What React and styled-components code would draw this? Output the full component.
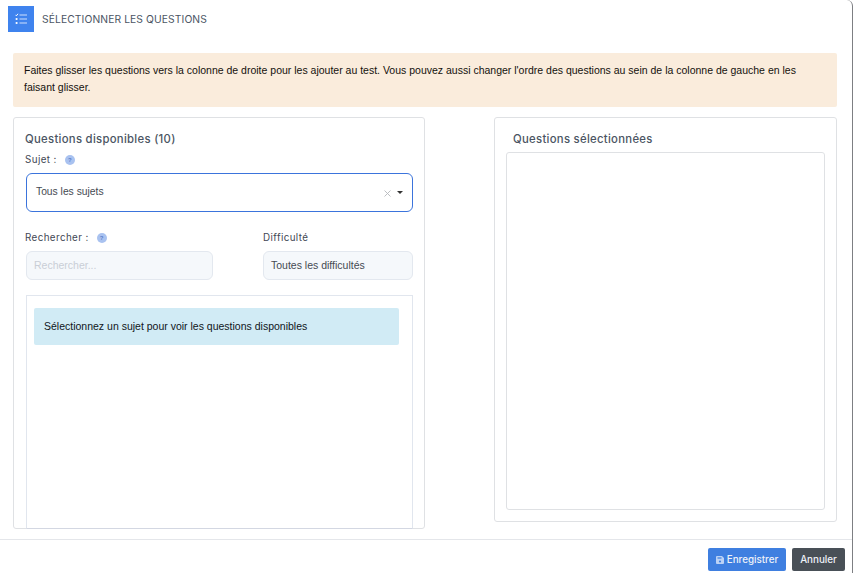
import React from "react";
import styled, { createGlobalStyle } from "styled-components";

const GlobalStyle = createGlobalStyle`
  html, body {
    margin: 0;
    padding: 0;
    background: #fff;
  }
  * {
    box-sizing: border-box;
  }
`;

const heading = `"Inter", "Noto Sans", sans-serif`;
const body = `"Liberation Sans", Arial, sans-serif`;

const Modal = styled.div`
  width: 853px;
  height: 573px;
  display: flex;
  flex-direction: column;
  background: #fff;
  border-right: 1px solid #7d7f83;
  border-top-right-radius: 6px;
  overflow: hidden;
`;

const Header = styled.div`
  height: 53px;
  flex: none;
  display: flex;
  align-items: flex-start;
  gap: 8px;
  padding: 6px 8px 0;
`;

const HeaderIcon = styled.div`
  width: 26px;
  height: 26px;
  background: #3f83ee;
  display: flex;
  align-items: center;
  justify-content: center;
`;

const Title = styled.div`
  font-family: ${heading};
  font-size: 10.3px;
  line-height: 26px;
  letter-spacing: 0.1px;
  color: #4b5563;
`;

const Content = styled.div`
  flex: 1;
  min-height: 0;
  padding: 0 15px 0 13px;
`;

const Alert = styled.div`
  height: 54px;
  padding: 9px 11px;
  background: #faecdc;
  border-radius: 2px;
  font-family: ${body};
  font-size: 10.5px;
  line-height: 17px;
  color: #14110d;
`;

const Columns = styled.div`
  display: flex;
  justify-content: space-between;
  align-items: flex-start;
  margin-top: 10px;
`;

const LeftPanel = styled.div`
  width: 412px;
  height: 412px;
  padding: 13px 11px 0 12px;
  border: 1px solid #dfe1e4;
  border-radius: 3px;
  display: flex;
  flex-direction: column;
`;

const RightPanel = styled.div`
  width: 343px;
  height: 405px;
  padding: 13px 11px 11px;
  border: 1px solid #dfe1e4;
  border-radius: 3px;
  display: flex;
  flex-direction: column;
`;

const PanelTitle = styled.div`
  font-family: ${heading};
  font-size: 11.3px;
  font-weight: 500;
  line-height: 17px;
  letter-spacing: 0.3px;
  color: #4b5563;
  margin-left: ${(p) => p.$indent || 0}px;
`;

const Label = styled.div`
  display: flex;
  align-items: center;
  gap: ${(p) => p.$gap || 0}px;
  margin-left: ${(p) => p.$indent || 0}px;
  font-family: ${heading};
  font-size: 9.8px;
  font-weight: 400;
  line-height: 14px;
  letter-spacing: 0.4px;
  color: #3f4754;
`;

const SubjectLabel = styled(Label)`
  margin-top: 5px;
`;

const Help = styled.span`
  width: 10px;
  height: 10px;
  border-radius: 50%;
  background: #a9c2f0;
  color: #5b7fc9;
  font-family: ${body};
  font-size: 6px;
  font-weight: 700;
  line-height: 10px;
  text-align: center;
  letter-spacing: 0;
`;

const SelectBox = styled.div`
  height: 39px;
  margin: 6px 0 19px;
  padding: 0 9px 2px;
  border: 1px solid #3b74dc;
  border-radius: 6px;
  display: flex;
  align-items: center;
  font-family: ${body};
  font-size: 10.3px;
  color: #444a52;
`;

const SelectValue = styled.span`
  flex: 1;
`;

const Clear = styled.svg`
  width: 7px;
  height: 7px;
  margin: 4px 6px 0 0;
`;

const Caret = styled.span`
  width: 0;
  height: 0;
  margin-top: 1px;
  border-left: 3px solid transparent;
  border-right: 3px solid transparent;
  border-top: 3px solid #333;
`;

const FilterRow = styled.div`
  display: grid;
  grid-template-columns: 187px 150px;
  justify-content: space-between;
`;

const Field = styled.div`
  display: flex;
  flex-direction: column;
  gap: 6px;
`;

const Input = styled.div`
  height: 29px;
  padding: 0 7px 2px;
  background: #f5f8fb;
  border: 1px solid #e3e8ef;
  border-radius: 6px;
  display: flex;
  align-items: center;
  font-family: ${body};
  font-size: 10.5px;
  color: ${(p) => (p.$placeholder ? "#c9ced6" : "#444a52")};
`;

const ListBox = styled.div`
  flex: 1;
  margin: 15px 0 -1px;
  padding: 12px 13px 0 7px;
  border: 1px solid #e1e6ee;
  border-bottom-color: #d3d7e2;
`;

const Info = styled.div`
  height: 37px;
  padding: 0 10px 2px;
  background: #d1ebf5;
  border-radius: 2px;
  display: flex;
  align-items: center;
  font-family: ${body};
  font-size: 10.5px;
  color: #10151a;
`;

const DropZone = styled.div`
  flex: 1;
  margin-top: 4px;
  border: 1px solid #dfe1e4;
  border-radius: 3px;
`;

const Footer = styled.div`
  height: 34px;
  flex: none;
  border-top: 1px solid #e4e6ea;
  display: flex;
  justify-content: flex-end;
  align-items: flex-start;
  gap: 6px;
  padding: 8px 7px 0 0;
`;

const Button = styled.div`
  width: ${(p) => p.$width}px;
  height: 23px;
  border-radius: 2px;
  background: ${(p) => (p.$primary ? "#3f7fe0" : "#495057")};
  color: #eef2f8;
  display: flex;
  align-items: center;
  justify-content: center;
  gap: 3px;
  font-family: ${heading};
  font-size: 9.8px;
  font-weight: 500;
`;

const ChecklistIcon = () => (
  <svg width="12" height="12" viewBox="0 0 12 12" fill="none">
    <path d="M4.5 2h7.5M4.5 6h7.5M4.5 10h7.5" stroke="#cfe0fb" strokeWidth="1.2" />
    <path d="M.4 1.8l1 1L3 .8" stroke="#fff" strokeWidth="1" />
    <circle cx="1.6" cy="6" r="1.1" fill="#fff" />
    <circle cx="1.6" cy="10" r="1.1" fill="#fff" />
  </svg>
);

const SaveIcon = () => (
  <svg width="8" height="8" viewBox="0 0 8 8">
    <path d="M1 0h5l2 2v5a1 1 0 0 1-1 1H1a1 1 0 0 1-1-1V1a1 1 0 0 1 1-1z" fill="#bcd2f5" />
    <rect x="1.5" y="1" width="4" height="2" fill="#6f9fe8" />
    <circle cx="4" cy="5.5" r="1.1" fill="#3f7fe0" />
  </svg>
);

export default function App() {
  return (
    <>
      <GlobalStyle />
      <Modal>
        <Header>
          <HeaderIcon>
            <ChecklistIcon />
          </HeaderIcon>
          <Title>SÉLECTIONNER LES QUESTIONS</Title>
        </Header>
        <Content>
          <Alert>
            Faites glisser les questions vers la colonne de droite pour les ajouter au test. Vous pouvez aussi changer
            l'ordre des questions au sein de la colonne de gauche en les faisant glisser.
          </Alert>
          <Columns>
            <LeftPanel>
              <PanelTitle $indent={-1}>Questions disponibles (10)</PanelTitle>
              <SubjectLabel $gap={8} $indent={-1}>
                Sujet :<Help>?</Help>
              </SubjectLabel>
              <SelectBox>
                <SelectValue>Tous les sujets</SelectValue>
                <Clear viewBox="0 0 7 7">
                  <path d="M.5.5l6 6M6.5.5l-6 6" stroke="#b5b8bc" strokeWidth="0.9" />
                </Clear>
                <Caret />
              </SelectBox>
              <FilterRow>
                <Field>
                  <Label $gap={8} $indent={-1}>
                    Rechercher :<Help>?</Help>
                  </Label>
                  <Input $placeholder>Rechercher...</Input>
                </Field>
                <Field>
                  <Label>Difficulté</Label>
                  <Input>Toutes les difficultés</Input>
                </Field>
              </FilterRow>
              <ListBox>
                <Info>Sélectionnez un sujet pour voir les questions disponibles</Info>
              </ListBox>
            </LeftPanel>
            <RightPanel>
              <PanelTitle $indent={7}>Questions sélectionnées</PanelTitle>
              <DropZone />
            </RightPanel>
          </Columns>
        </Content>
        <Footer>
          <Button $primary $width={78}>
            <SaveIcon />
            Enregistrer
          </Button>
          <Button $width={53}>Annuler</Button>
        </Footer>
      </Modal>
    </>
  );
}
